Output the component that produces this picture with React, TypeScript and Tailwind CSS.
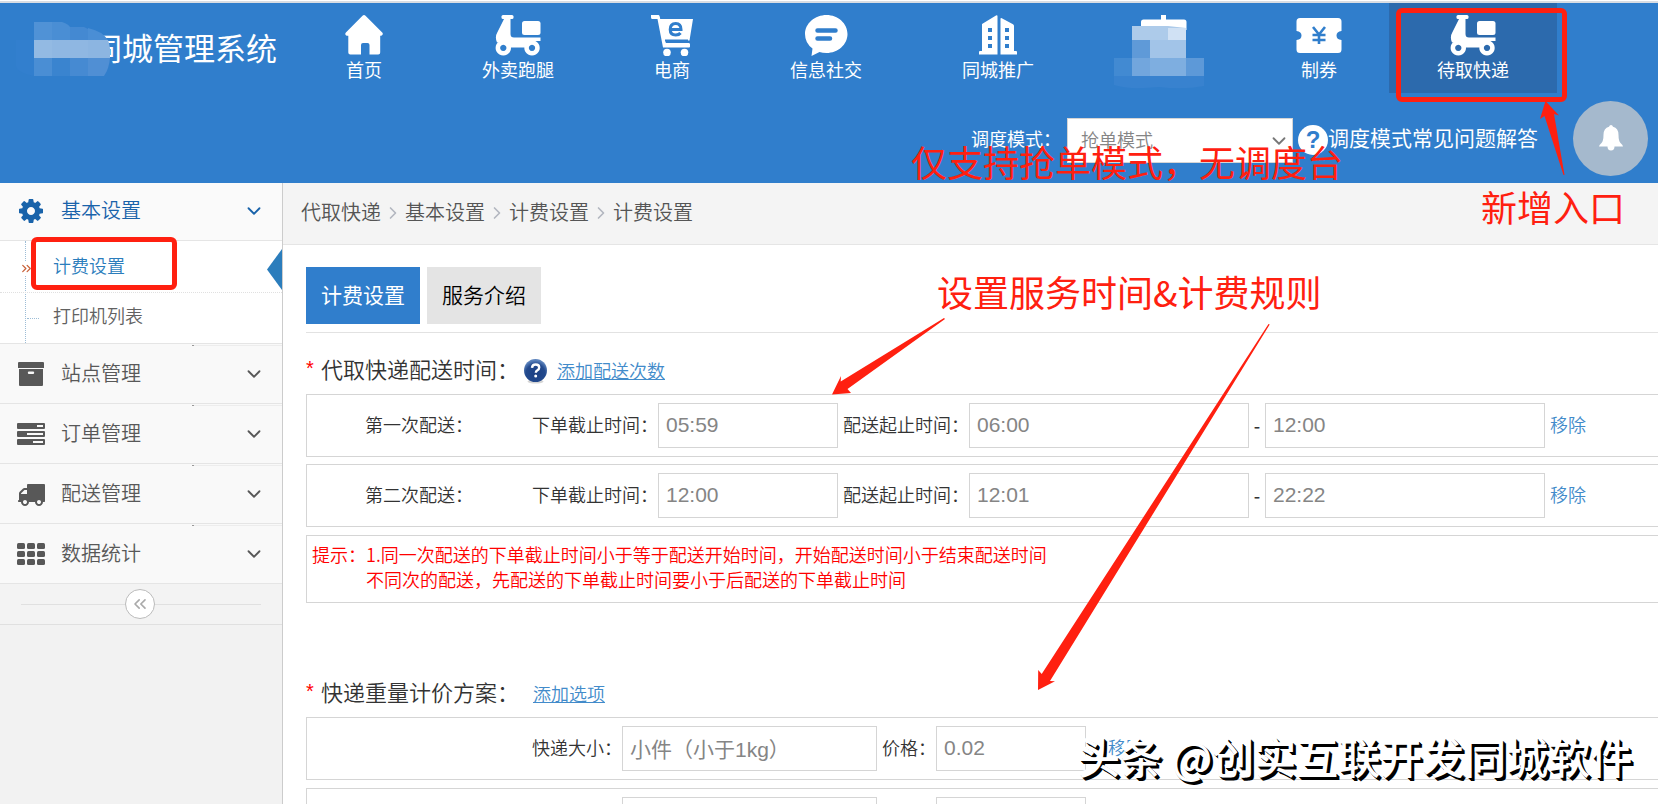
import React from 'react';
import { ChevronDown, ChevronRight, ChevronsLeft, ChevronsRight } from 'lucide-react';

interface NavItem {
  label: string;
  icon: React.ReactNode;
  active?: boolean;
}

interface SlotRow {
  name: string;
  deadline: string;
  start: string;
  end: string;
}

const ScooterIcon = () => (
  <svg className="shrink-0" width="46" height="41" viewBox="0 0 46 41" fill="currentColor">
    <rect x="6.500" y="0" width="12" height="4" rx="1.500" />
    <path d="M9.500 3h6v16q0 3.500 3.500 3.500H45.500V26h-8L30 32.500H15L9 26.500l-7 1Q-.5 22 2.500 17z" />
    <rect x="27" y="6" width="18.500" height="14" rx="2.500" />
    <path fillRule="evenodd" d="M8.300 25.200a7.700 7.700 0 1 0 .01 0zM8.300 29.800a3.100 3.100 0 1 1-.01 0z" />
    <path fillRule="evenodd" d="M37 25.200a7.700 7.700 0 1 0 .01 0zM37 29.800a3.100 3.100 0 1 1-.01 0z" />
  </svg>
);

const HomeIcon = () => (
  <svg className="shrink-0" width="38" height="40" viewBox="0 0 38 40" fill="currentColor">
    <path d="M17.500.8q1.500-1.400 3 0L37.200 17.500q1 1 .3 2.200-.6 1-1.500 1h-.8v16.800q0 2-2 2h-8.700v-9.500q0-2-2-2h-4.500q-2 0-2 2v9.500H5.300q-2 0-2-2V20.700H2q-1 0-1.500-1-.6-1.200.4-2.200z" />
  </svg>
);

const CartIcon = () => (
  <svg className="shrink-0" width="43" height="41" viewBox="0 0 43 41">
    <path d="M0 0h7.500q1.200 0 1.700 4H42l-3.500 21.500H14.500l.3 2.500H38q1 0 1 1.500v2q0 1-1 1H12L6.500 4H1.500Q0 4 0 2.500z" fill="currentColor" />
    <circle cx="16" cy="37.500" r="3.800" fill="currentColor" />
    <circle cx="33.500" cy="37.500" r="3.800" fill="currentColor" />
    <path d="M19.500 14.500h10.500q0-6-5.300-6-5.500 0-5.500 6 0 5.500 5.500 5.500 3.300 0 4.800-2" fill="none" stroke="#307ecc" strokeWidth="3" />
    <path d="M14 25.500h23" stroke="#307ecc" strokeWidth="2" />
  </svg>
);

const ChatIcon = () => (
  <svg className="shrink-0" width="43" height="41" viewBox="0 0 43 41">
    <path d="M21.500 0C33 0 42.500 8.500 42.500 19S33 38 21.500 38q-4 0-7-1L6.500 41l1-7.500Q0 28 0 19C0 8.500 10 0 21.500 0z" fill="currentColor" />
    <path d="M12.500 15.500h18M12.500 23.500h12.500" stroke="#307ecc" strokeWidth="4.500" strokeLinecap="round" />
  </svg>
);

const BuildingIcon = () => (
  <svg className="shrink-0" width="38" height="40" viewBox="0 0 38 40">
    <path d="M3 9L17 .5q1.500-.8 1.500.8V39.500H0V37q0-1 1-1h2zM21.500 4q0-1.500 1.300-.7L34 9.300q1 .5 1 1.700V36h2q1 0 1 1v2.500H21.500z" fill="currentColor" />
    <path d="M9 13h4v4H9zM9 21h4v4H9zM9 29h4v4H9zM26 13h4v4h-4zM26 21h4v4h-4zM26 29h4v4h-4z" fill="#307ecc" />
  </svg>
);

const CouponIcon = () => (
  <svg className="shrink-0" width="46" height="40" viewBox="0 0 46 40">
    <path d="M4 3h38q3.500 0 3.500 3.500V16q-5 .5-5 4.500t5 4.500v9.500q0 3.500-3.500 3.500H4q-3.500 0-3.500-3.500V25q5-.5 5-4.500t-5-4.500V6.500Q.5 3 4 3z" fill="currentColor" />
    <path d="M17 12l6 7.500 6-7.500M23 19.500V29M16.500 20h13M16.500 25h13" fill="none" stroke="#307ecc" strokeWidth="2.600" />
  </svg>
);

const StoreIcon = () => (
  <svg className="shrink-0" width="46" height="40" viewBox="0 0 46 40" fill="currentColor">
    <path d="M20 0h5v4.500h18q2.500 0 2.500 2.500v8H0V7q0-2.500 2.500-2.500H20z" />
  </svg>
);

const GearIcon = () => (
  <svg width="28" height="28" viewBox="0 0 1792 1792" fill="currentColor">
    <path d="M1152 896q0-106-75-181t-181-75-181 75-75 181 75 181 181 75 181-75 75-181zm512-109v222q0 12-8 23t-20 13l-185 28q-19 54-39 91 35 50 107 138 10 12 10 25t-9 23q-27 37-99 108t-94 71q-12 0-26-9l-138-108q-44 23-91 38-16 136-29 186-7 28-36 28h-222q-14 0-24.500-8.500t-11.500-21.500l-28-184q-49-16-90-37l-141 107q-10 9-25 9-14 0-25-11-126-114-165-168-7-10-7-23 0-12 8-23 15-21 51-66.500t54-70.500q-27-50-41-99l-183-27q-13-2-21-12.500t-8-23.500v-222q0-12 8-23t19-13l186-28q14-46 39-92-40-57-107-138-10-12-10-24 0-10 9-23 26-36 98.500-107.500t94.500-71.500q13 0 26 10l138 107q44-23 91-38 16-136 29-186 7-28 36-28h222q14 0 24.500 8.500t11.500 21.500l28 184q49 16 90 37l142-107q9-9 24-9 13 0 25 10 129 119 165 170 7 8 7 22 0 12-8 23-15 21-51 66.500t-54 70.500q26 50 41 98l183 28q13 2 21 12.500t8 23.500z" />
  </svg>
);

const ArchiveIcon = () => (
  <svg width="28" height="24" viewBox="0 0 28 24" fill="currentColor">
    <path d="M2 0h24q1 0 1 1v5H1V1q0-1 1-1z" />
    <path fillRule="evenodd" d="M2 7h24v16q0 1-1 1H3q-1 0-1-1zM12 9.500q-1.200 0-1.200 1.200t1.200 1.200h4q1.200 0 1.200-1.200T16 9.500z" />
  </svg>
);

const TasksIcon = () => (
  <svg width="28" height="22" viewBox="0 0 28 22" fill="currentColor">
    <path fillRule="evenodd" d="M1 0h26q1 0 1 1v4q0 1-1 1H1q-1 0-1-1V1q0-1 1-1zM20 2v2h6V2z" />
    <path fillRule="evenodd" d="M1 8h26q1 0 1 1v4q0 1-1 1H1q-1 0-1-1V9q0-1 1-1zM10 10v2h16v-2z" />
    <path fillRule="evenodd" d="M1 16h26q1 0 1 1v4q0 1-1 1H1q-1 0-1-1v-4q0-1 1-1zM16 18v2h10v-2z" />
  </svg>
);

const TruckIcon = () => (
  <svg width="28" height="28" viewBox="0 0 1792 1792" fill="currentColor">
    <path d="M640 1408q0-52-38-90t-90-38-90 38-38 90 38 90 90 38 90-38 38-90zm-384-512h384v-256h-158q-13 0-22 9l-195 195q-9 9-9 22v30zm1280 512q0-52-38-90t-90-38-90 38-38 90 38 90 90 38 90-38 38-90zm256-1088v1024q0 15-4 26.500t-13.500 18.500-16.500 11.500-23.500 6-22.500 2-25.500 0-22.500-.5q0 106-75 181t-181 75-181-75-75-181h-384q0 106-75 181t-181 75-181-75-75-181h-64q-3 0-22.500.5t-25.500 0-22.500-2-23.500-6-16.500-11.500-13.500-18.500-4-26.500q0-26 19-45t45-19v-320q0-8-.5-35t0-38 2.500-34.500 6.500-37 14-30.500 22.500-30l198-198q19-19 50.500-32t58.500-13h160v-192q0-26 19-45t45-19h1024q26 0 45 19t19 45z" />
  </svg>
);

const GridIcon = () => (
  <svg width="28" height="22" viewBox="0 0 28 22" fill="currentColor">
    {[0, 8, 16].map((y) =>
      [0, 10, 20].map((x) => <rect key={`${x}-${y}`} x={x} y={y} width="8" height="6" rx="1.500" />)
    )}
  </svg>
);

const BellIcon = () => (
  <svg width="24" height="26" viewBox="0 0 24 26" fill="currentColor">
    <path d="M12 0q1.500 0 2 1.700 5.500 1.500 5.500 8 0 6 2 8.300 2.500 2 2.500 3.500H0Q0 20 2.500 18q2-2.300 2-8.300 0-6.500 5.500-8Q10.500 0 12 0zM8.500 21.500h7q0 4-3.500 4t-3.500-4z" />
  </svg>
);

const HelpIcon = () => (
  <svg width="23" height="25" viewBox="0 0 23 25">
    <defs>
      <radialGradient id="help" cx="50%" cy="65%" r="60%">
        <stop offset="0%" stopColor="#1c3f82" />
        <stop offset="70%" stopColor="#234a8e" />
        <stop offset="100%" stopColor="#5d84bd" />
      </radialGradient>
    </defs>
    <ellipse cx="11.500" cy="22.500" rx="8" ry="2" fill="#d5d5d5" />
    <circle cx="11.500" cy="11.500" r="11.500" fill="url(#help)" />
    <path d="M8 8.800q.3-3.300 3.700-3.300 3.500 0 3.500 3 0 1.700-1.800 2.700-1.600.9-1.600 2.500" fill="none" stroke="#fff" strokeWidth="2.400" />
    <circle cx="11.700" cy="17" r="1.500" fill="#fff" />
  </svg>
);

const navItems: NavItem[] = [
  { label: '首页', icon: <HomeIcon /> },
  { label: '外卖跑腿', icon: <ScooterIcon /> },
  { label: '电商', icon: <CartIcon /> },
  { label: '信息社交', icon: <ChatIcon /> },
  { label: '同城推广', icon: <BuildingIcon /> },
  { label: '', icon: <StoreIcon /> },
  { label: '制券', icon: <CouponIcon /> },
  { label: '待取快递', icon: <ScooterIcon />, active: true },
];

const menuItems = [
  { label: '站点管理', icon: <ArchiveIcon /> },
  { label: '订单管理', icon: <TasksIcon /> },
  { label: '配送管理', icon: <TruckIcon /> },
  { label: '数据统计', icon: <GridIcon /> },
];

const crumbs = ['代取快递', '基本设置', '计费设置', '计费设置'];

const slots: SlotRow[] = [
  { name: '第一次配送：', deadline: '05:59', start: '06:00', end: '12:00' },
  { name: '第二次配送：', deadline: '12:00', start: '12:01', end: '22:22' },
];

const prices = [
  { size: '小件（小于1kg）', price: '0.02' },
  { size: '', price: '' },
];

const fieldClass =
  'h-[45px] border border-[#d5d5d5] bg-white px-[7px] pb-[2px] text-[21px] text-[#858585] font-normal font-["Liberation_Sans","Noto_Sans_CJK_SC",sans-serif] outline-none shrink-0';

const LogoMosaic = () => (
  <svg className="absolute left-[16px] top-[19px]" width="94" height="56" viewBox="0 0 94 56">
    <path d="M0 18h18v36Q0 50 0 44z" fill="#327fce" />
    <path d="M18 0h18v18H18z" fill="#5092d6" />
    <path d="M36 0h10q6 2 8 5v13H36z" fill="#4a8ed4" />
    <path d="M54 5h14l4 2v11H54z" fill="#4489d2" />
    <path d="M72 6q14 3 20 12H72z" fill="#4a8ed5" />
    <path d="M18 18h18v18H18z" fill="#93bae3" />
    <path d="M36 18h36v18H36z" fill="#8fb7e2" />
    <path d="M72 18h20q3 8 2 18H72z" fill="#8cb5e1" />
    <path d="M18 36h18v18H18z" fill="#4a8ed4" />
    <path d="M36 36h18v18H36z" fill="#3a84cf" />
    <path d="M54 36h18v18H54z" fill="#468ad2" />
    <path d="M72 36h22q-1 11-6 18H72z" fill="#508fd4" />
  </svg>
);

const StoreMosaic = () => (
  <svg className="absolute left-[28px] top-[23px]" width="90" height="64" viewBox="0 0 90 64">
    <path d="M18 0h36l18 2v12H18z" fill="#adcbea" />
    <path d="M54 2h18v12H54z" fill="#d0e1f4" />
    <path d="M18 14h18v18H18z" fill="#5f9ad8" />
    <path d="M36 14h36v18H36z" fill="#a2c4e8" />
    <path d="M0 32h18v18H0z" fill="#428ad2" />
    <path d="M18 32h18v18H18z" fill="#72a6dd" />
    <path d="M36 32h36v18H36z" fill="#7eaee0" />
    <path d="M72 32h18v18H72z" fill="#5d99d8" />
    <path d="M0 50h90v10q-20 4-45 1Q15 64 0 59z" fill="#3882cf" />
  </svg>
);

const Header = () => (
  <header className="relative shrink-0 border-t-2 border-[#d9dde3] bg-[#307ecc] text-white">
    <div className="flex h-[90px]">
      <div className="relative w-[298px] shrink-0 pl-[91px] pt-5">
        <h1 className="text-[31px] leading-[48px] font-normal whitespace-nowrap">同城管理系统</h1>
        <LogoMosaic />
      </div>
      <nav className="flex gap-1">
        {navItems.map((item, i) => (
          <a
            key={i}
            href="#"
            className={`relative flex shrink-0 flex-col items-center gap-[2px] px-12 pt-3 ${
              item.active ? 'bg-[#2c6aad]' : ''
            } ${item.label ? '' : 'mr-2 w-[155px]'}`}
          >
            <span className="flex h-10 w-9 items-center justify-center">{item.icon}</span>
            <span className="text-[18px] leading-6 whitespace-nowrap">{item.label}</span>
            {!item.label && <StoreMosaic />}
          </a>
        ))}
      </nav>
    </div>
    <div className="flex h-[90px] items-center justify-end pr-[10px]">
      <label htmlFor="mode" className="text-[18px]">调度模式：</label>
      <div className="relative ml-[6px] mt-1">
        <select
          id="mode"
          className="h-[45px] w-[226px] appearance-none border border-[#d5d5d5] bg-white pl-[13px] pb-[2px] text-[18px] font-[350] text-[#858585]"
        >
          <option>抢单模式</option>
        </select>
        <ChevronDown size={22} strokeWidth={2} className="pointer-events-none absolute right-[3px] top-3 text-[#777]" />
      </div>
      <a href="#" className="ml-[5px] flex items-center text-[21px]">
        <span className="mt-1 flex h-[30px] w-[30px] items-center justify-center rounded-full bg-white font-['Liberation_Sans',sans-serif] text-2xl font-bold text-[#307ecc]">
          ?
        </span>
        调度模式常见问题解答
      </a>
      <button aria-label="消息" className="ml-[35px] flex h-[75px] w-[75px] items-center justify-center rounded-full bg-[#a5b9cd]">
        <BellIcon />
      </button>
    </div>
  </header>
);

const Sidebar = () => (
  <aside className="w-[283px] shrink-0 border-r border-[#ccc] bg-[#f2f2f2] font-[350] text-[#585858]">
    <button className="flex h-[58px] w-full items-center border-b border-[#e5e5e5] bg-[#fafafa] px-[17px] pb-[2px] text-[20px] text-[#1963aa]">
      <GearIcon />
      <span className="ml-4 flex-1 pb-[2px] text-left">基本设置</span>
      <ChevronDown size={22} />
    </button>
    <ul className="relative border-b border-[#e5e5e5] bg-white text-[18px]">
      <li className="absolute bottom-0 left-[25px] top-0 border-l border-dotted border-[#9dbdd6]" aria-hidden="true" />
      <li className="relative flex h-[52px] items-center border-b border-dotted border-[#e0e0e0]">
        <span className="flex w-[53px] pl-[19px] pt-1 text-[#c86139]">
          <ChevronsRight size={15} className="bg-white" />
        </span>
        <a href="#" className="pb-[2px] text-[#2b7dbc]">计费设置</a>
        <svg className="absolute right-0 top-2" width="15" height="41" viewBox="0 0 15 41">
          <path d="M15 0v41L0 20.500z" fill="#2b7dbc" />
        </svg>
      </li>
      <li className="flex h-[50px] items-center">
        <span className="ml-[27px] mr-[14px] w-3 border-t border-dotted border-[#9dbdd6]" />
        <a href="#" className="pb-[6px] text-[#616161]">打印机列表</a>
      </li>
    </ul>
    {menuItems.map((item) => (
      <button
        key={item.label}
        className="relative flex h-[60px] w-full items-center border-b border-[#e5e5e5] bg-[#f9f9f9] px-[17px] text-[20px]"
      >
        <span className="absolute right-0 top-px w-[88px] border-t border-[#ededed]" />
        <span className="absolute right-[88px] top-px h-px w-[2px] bg-[#999]" />
        {item.icon}
        <span className="ml-4 flex-1 pb-[2px] text-left">{item.label}</span>
        <ChevronDown size={22} />
      </button>
    ))}
    <div className="flex h-[41px] items-center border-b border-[#e0e0e0] bg-[#f3f3f3] px-[21px]">
      <span className="w-[104px] border-t border-[#e0e0e0]" />
      <button aria-label="收起" className="flex h-[30px] w-[30px] items-center justify-center rounded-full border border-[#bbb] bg-white text-[#aaa]">
        <ChevronsLeft size={20} />
      </button>
      <span className="flex-1 border-t border-[#e0e0e0]" />
    </div>
  </aside>
);

const SectionTitle = ({ children, extra }: { children: React.ReactNode; extra: React.ReactNode }) => (
  <div className="flex h-[49px] items-center">
    <span className="w-[15px] pb-1 font-['Liberation_Sans',sans-serif] text-[20px] font-normal text-[#f00]">*</span>
    <h2 className="pb-[3px] text-[22px] font-[350]">{children}</h2>
    {extra}
  </div>
);

const SlotTable = () => (
  <div className="flex flex-col gap-[7px]">
    {slots.map((row, i) => (
      <div key={row.name} className="flex h-[63px] items-center overflow-hidden border-y border-l border-[#d5d5d5] whitespace-nowrap">
        <span className="w-[225px] shrink-0 pb-[3px] pl-[58px]">{row.name}</span>
        <label htmlFor={`deadline${i}`} className="pb-[3px]">下单截止时间：</label>
        <input id={`deadline${i}`} defaultValue={row.deadline} className={`${fieldClass} w-[180px]`} />
        <label htmlFor={`start${i}`} className="ml-[5px] pb-[3px]">配送起止时间：</label>
        <input id={`start${i}`} defaultValue={row.start} className={`${fieldClass} w-[280px]`} />
        <span className="w-4 text-center font-medium">-</span>
        <input aria-label="配送结束时间" defaultValue={row.end} className={`${fieldClass} w-[280px]`} />
        <a href="#" className="ml-[5px] pb-[3px] text-[#428bca]">移除</a>
      </div>
    ))}
  </div>
);

const PriceTable = () => (
  <div className="flex flex-col gap-2">
    {prices.map((row, i) => (
      <div key={i} className="flex h-[63px] items-center border-y border-l border-[#d5d5d5] pl-[225px] whitespace-nowrap">
        <label htmlFor={`size${i}`} className="pb-[3px]">快递大小：</label>
        <input id={`size${i}`} defaultValue={row.size} className={`${fieldClass} w-[255px]`} />
        <label htmlFor={`price${i}`} className="ml-[5px] pb-[3px]">价格：</label>
        <input id={`price${i}`} defaultValue={row.price} className={`${fieldClass} w-[150px]`} />
        <a href="#" className="ml-[22px] pb-[3px] text-[#428bca]">移除</a>
      </div>
    ))}
  </div>
);

const Content = () => (
  <main className="min-w-0 flex-1 bg-white text-[18px] font-[350] text-[#333]">
    <nav className="flex h-[62px] items-center border-b border-[#e5e5e5] bg-[#f4f4f4] pb-1 pl-[18px] text-[20px] text-[#555]">
      {crumbs.map((c, i) => (
        <React.Fragment key={i}>
          {i > 0 && <ChevronRight size={20} className="mx-[2px] mt-[3px] text-[#b2b6bf]" />}
          <a href="#">{c}</a>
        </React.Fragment>
      ))}
    </nav>
    <div className="pl-[23px] pt-[22px]">
      <div className="flex gap-[7px] border-b border-[#e2e2e2] pb-2 text-[21px]">
        <button className="h-[57px] bg-[#307ecc] px-[15px] pb-[2px] font-normal text-white">计费设置</button>
        <button className="h-[57px] bg-[#e4e4e4] px-[15px] pb-[2px] text-black">服务介绍</button>
      </div>

      <section className="pt-3">
        <SectionTitle
          extra={
            <>
              <span className="ml-[5px] mr-[10px] pt-1"><HelpIcon /></span>
              <a href="#" className="pt-[2px] text-[#428bca] underline">添加配送次数</a>
            </>
          }
        >
          代取快递配送时间：
        </SectionTitle>
        <SlotTable />
        <div className="mt-2 flex h-[68px] border-y border-l border-[#d5d5d5] pl-[5px] pt-[6px] leading-[25px] text-[#f00]">
          <span>提示：</span>
          <p>
            1.同一次配送的下单截止时间小于等于配送开始时间，开始配送时间小于结束配送时间
            <br />
            不同次的配送，先配送的下单截止时间要小于后配送的下单截止时间
          </p>
        </div>
      </section>

      <section className="pt-[65px]">
        <SectionTitle extra={<a href="#" className="ml-[14px] pt-[2px] text-[#428bca] underline">添加选项</a>}>
          快递重量计价方案：
        </SectionTitle>
        <PriceTable />
      </section>
    </div>
  </main>
);

// Hand-placed callouts on top of the page
const Annotations = () => (
  <div className="pointer-events-none absolute inset-0 text-[36px] leading-[48px] font-normal whitespace-nowrap text-[#ff2010]">
    <div className="absolute left-[1396px] top-[8px] h-[94px] w-[171px] rounded-md border-[5px] border-[#ff2010]" />
    <div className="absolute left-[31px] top-[237px] h-[53px] w-[146px] rounded-md border-[5px] border-[#ff2010]" />
    <p className="absolute left-[911px] top-[137px]">仅支持抢单模式，无调度台</p>
    <p className="absolute left-[1481px] top-[182px]">新增入口</p>
    <p className="absolute left-[937px] top-[267px]">设置服务时间&amp;计费规则</p>
    <svg className="absolute left-0 top-0" width="1658" height="804" viewBox="0 0 1658 804" fill="#ff2010">
      <path d="M1545.500 101l13.500 14.500-5-1.500 10.500 61h-1L1544.500 116l-4.500 3z" />
      <path d="M832 394.500l9-18.500-.3 5.500L944 318l1 1-97.500 70 3.500 4z" />
      <path d="M1038 690l.2-20 3.500 4L1268.500 324l1.200.5L1050 681l5 .3z" />
    </svg>
    <p className="absolute left-[1078px] top-[728px] text-[42px] leading-[56px] font-medium text-white [text-shadow:1px_1px_0_#000,2px_2px_0_#000,3px_3px_0_#000,-1px_-1px_0_#fff,-2px_-2px_0_#fff]">
      头条 @创实互联开发同城软件
    </p>
  </div>
);

export default function App() {
  return (
    <div className="relative flex h-screen flex-col overflow-hidden bg-white pt-px font-['Noto_Sans_CJK_SC',sans-serif]">
      <Header />
      <div className="flex min-h-0 flex-1">
        <Sidebar />
        <Content />
      </div>
      <Annotations />
    </div>
  );
}
